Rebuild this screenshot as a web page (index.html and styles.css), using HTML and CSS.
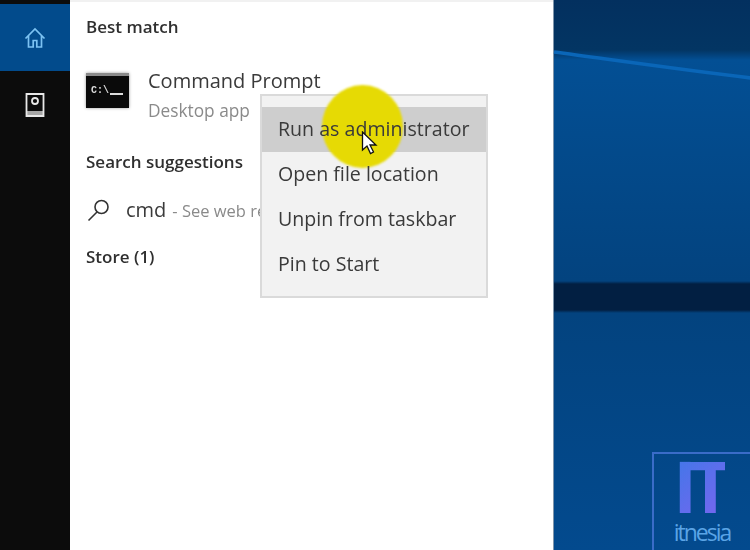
FILE: index.html
```html
<!DOCTYPE html>
<html lang="en">
<head>
    <meta charset="UTF-8">
    <title>Command Prompt search</title>
    <link rel="stylesheet" href="styles.css">
</head>
<body>
    <div class="screen">
        <nav class="rail">
            <a class="rail-item rail-home">
                <svg width="24" height="24" viewBox="0 0 24 24" fill="none" stroke="#7cc2f2" stroke-width="1.7">
                    <path d="M2.500 12.500 12 3l9.500 9.500M5.500 10v11h4.700v-6.500h3.600V21h4.700V10"/>
                </svg>
            </a>
            <a class="rail-item">
                <svg width="24" height="26" viewBox="0 0 24 26" fill="none" stroke="#e8e8e8" stroke-width="1.8">
                    <path d="M3.500 2h17v22h-17z"/>
                    <circle cx="12" cy="9" r="3"/>
                    <path d="M4 19h16v4H4z" fill="#e8e8e8" stroke="none" opacity=".7"/>
                </svg>
            </a>
        </nav>

        <main class="results">
            <h2 class="group-title">Best match</h2>
            <div class="app-row">
                <div class="cmd-icon"><span class="cmd-text">C:\</span><span class="cmd-cursor"></span></div>
                <div>
                    <p class="app-name">Command Prompt</p>
                    <p class="app-type">Desktop app</p>
                </div>
            </div>
            <h2 class="group-title group-suggest">Search suggestions</h2>
            <div class="suggest-row">
                <svg width="26" height="26" viewBox="0 0 26 26" fill="none" stroke="#333" stroke-width="1.6">
                    <circle cx="15.500" cy="10" r="6.500"/>
                    <path d="M11 15 2.500 23.500"/>
                </svg>
                <span class="suggest-term">cmd</span>
                <span class="suggest-hint">- See web results</span>
            </div>
            <h2 class="group-title group-store">Store (1)</h2>
        </main>

        <section class="wallpaper">
            <svg class="streak" width="197" height="80" viewBox="0 0 197 80">
                <path d="M0 52C60 60 130 70 197 78" fill="none" stroke="#0a66b8" stroke-width="3.500"/>
            </svg>
        </section>

        <div class="context-menu">
            <div class="menu-item">Run as administrator</div>
            <div class="menu-item">Open file location</div>
            <div class="menu-item">Unpin from taskbar</div>
            <div class="menu-item">Pin to Start</div>
        </div>
        <div class="click-spot"></div>
        <svg class="pointer" width="18" height="24" viewBox="0 0 18 24">
            <path d="M1.500 1v18l4.500-4 3.500 7.500 3-1.500-3.500-7h6z" fill="#fff" stroke="#111" stroke-width="1.300"/>
        </svg>

        <div class="watermark">
            <span class="logo-mark">IT</span>
            <span class="logo-name">itnesia</span>
        </div>
    </div>
</body>
</html>
```

FILE: styles.css
```css
html, body {
    margin: 0;
    padding: 0;
}
body {
    font-family: "Open Sans", "Noto Sans", sans-serif;
    color: #333;
}
p, h2 {
    margin: 0;
}
.screen {
    position: relative;
    display: flex;
    width: 750px;
    height: 550px;
    overflow: hidden;
}

/* left black strip */
.rail {
    width: 70px;
    flex: none;
    padding-top: 4px;
    box-sizing: border-box;
    background-color: #0c0c0c;
}
.rail-item {
    display: flex;
    align-items: center;
    justify-content: center;
    height: 67px;
}
.rail-home {
    background-color: #024b8c;
}

/* search results */
.results {
    width: 483px;
    flex: none;
    box-sizing: border-box;
    padding: 14px 0 0 16px;
    background-color: #fff;
    border-top: 2px solid #f1f1f1;
    filter: blur(0.3px);
}
.group-title {
    font-size: 17px;
    line-height: 22px;
    font-weight: 600;
    color: #2f2f2f;
}
.app-row {
    display: flex;
    gap: 19px;
    margin-top: 29px;
}
.cmd-icon {
    display: flex;
    align-items: center;
    gap: 1px;
    width: 43px;
    height: 35px;
    margin-top: 6px;
    box-sizing: border-box;
    padding: 0 0 4px 5px;
    background-color: #0a0a0a;
    border-top: 3px solid #8a8a8a;
    box-shadow: 0 0 3px rgba(0, 0, 0, 0.4);
}
.cmd-text {
    font: 700 10px "Liberation Mono", monospace;
    color: #ddd;
}
.cmd-cursor {
    width: 13px;
    height: 2px;
    margin-top: 8px;
    background-color: #ddd;
}
.app-name {
    font-size: 20px;
    line-height: 28px;
    color: #3a3a3a;
}
.app-type {
    margin-top: 4px;
    font-size: 17.300px;
    line-height: 24px;
    color: #8a8a8a;
}
.group-suggest {
    margin-top: 28px;
}
.suggest-row {
    display: flex;
    align-items: center;
    margin-top: 23px;
    white-space: nowrap;
}
.suggest-row svg {
    margin-right: 14px;
}
.suggest-term {
    font-size: 20px;
    line-height: 28px;
    color: #3a3a3a;
}
.suggest-hint {
    margin-left: 6px;
    font-size: 16.500px;
    color: #8a8a8a;
}
.group-store {
    margin-top: 22px;
}

/* desktop wallpaper */
.wallpaper {
    position: relative;
    flex: 1;
    border-left: 1px solid #7f95ab;
    background:
        linear-gradient(180deg, transparent 281px, #021f42 284px, #021f42 310px, transparent 313px),
        linear-gradient(180deg, #03305f 0, #033563 50px, #034f94 60px, #03437f 280px, #03437f 314px, #034a8e 550px);
}
.streak {
    position: absolute;
    top: 0;
    left: 0;
    overflow: visible;
}

/* right click menu, sits over the panel */
.context-menu {
    position: absolute;
    left: 260px;
    top: 94px;
    width: 228px;
    height: 204px;
    box-sizing: border-box;
    padding-top: 11px;
    background-color: #f2f2f2;
    border: 2px solid #dadada;
}
.menu-item {
    position: relative;
    z-index: 2;
    height: 45px;
    padding-left: 16px;
    font-size: 19.600px;
    line-height: 44px;
    color: #3a3a3a;
    filter: blur(0.3px);
}
.context-menu::before {
    content: "";
    position: absolute;
    top: 11px;
    left: 0;
    right: 0;
    height: 45px;
    background-color: #cecece;
}
.click-spot {
    position: absolute;
    z-index: 1;
    left: 322px;
    top: 85px;
    width: 81px;
    height: 83px;
    border-radius: 50%;
    background-color: #e6da04;
    filter: blur(0.8px);
}
.pointer {
    position: absolute;
    z-index: 3;
    left: 361px;
    top: 131px;
}

/* corner logo */
.watermark {
    position: absolute;
    left: 652px;
    top: 452px;
    display: flex;
    flex-direction: column;
    align-items: center;
    width: 98px;
    height: 98px;
    box-sizing: border-box;
    border: 2px solid #3a6cc8;
    border-right: 0;
    border-bottom: 0;
}
.logo-mark {
    margin-left: -4px;
    font: 700 75px/66px "Liberation Sans", sans-serif;
    letter-spacing: -8px;
    background: linear-gradient(135deg, #3f78e8, #7a64f0);
    -webkit-background-clip: text;
    background-clip: text;
    color: transparent;
}
.logo-name {
    font: 400 23px/24px "Open Sans", sans-serif;
    letter-spacing: -2px;
    color: #5aa4e6;
}
```
